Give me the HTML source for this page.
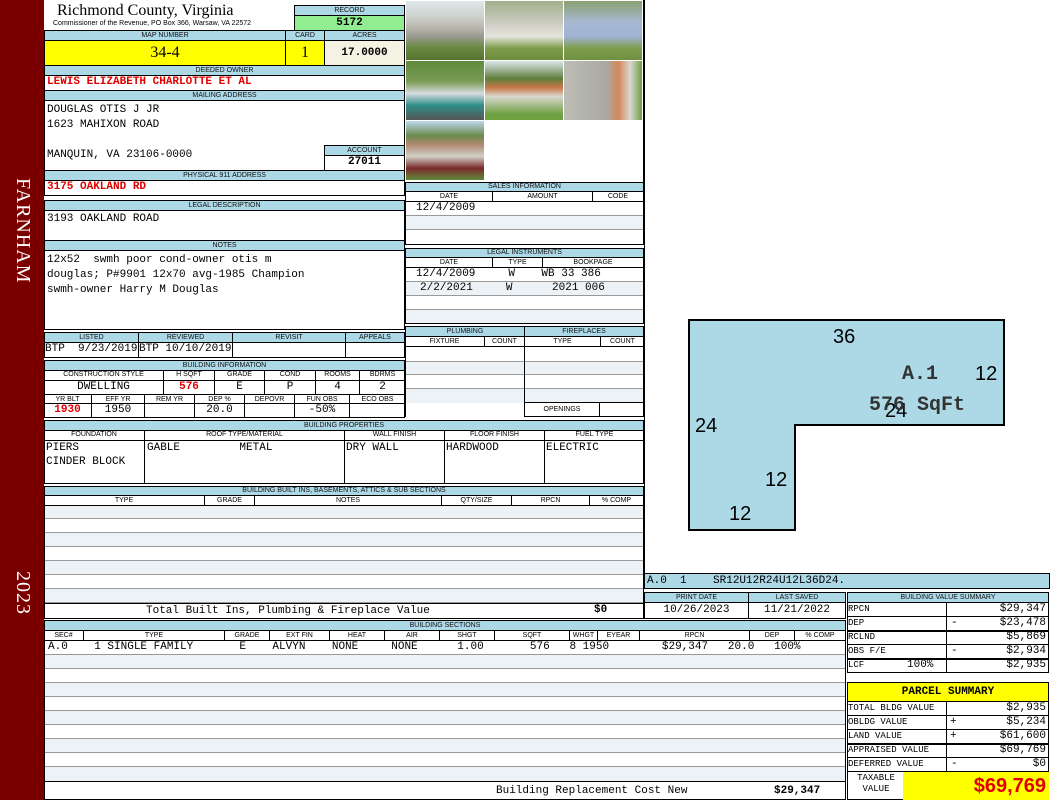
<!DOCTYPE html>
<html><head><meta charset="utf-8"><style>
*{margin:0;padding:0;box-sizing:border-box}
body{width:1050px;height:800px;background:#fff;position:relative;overflow:hidden;font-family:"Liberation Mono",monospace}
div{position:absolute}
.h{background:#add8e6;border:1px solid #000;font:7px/8px "Liberation Sans",sans-serif;text-align:center;color:#111;white-space:nowrap;overflow:hidden}
.b{border:1px solid #000;background:#fff}
.v{font-family:"Liberation Mono",monospace;font-size:11px;line-height:13px;white-space:pre;color:#000}
.r{color:#e00000;font-weight:bold}
.s{background:#edf2f7;border-bottom:1px solid #999}
.w{background:#fff;border-bottom:1px solid #999}
.ph{background:linear-gradient(#dfe7ea 0,#cfd4cf 25%,#b8b6ad 45%,#9a9990 60%,#6d8a45 78%,#55732e 100%);border:1px solid #fff}
.side{color:#fff;font:20px "Liberation Serif",serif;transform:rotate(90deg);transform-origin:left top;white-space:nowrap;letter-spacing:1px}
</style></head><body>
<div style="left:0;top:0;width:44px;height:800px;background:#7a0000"></div>
<div class="side" style="left:34px;top:178px">FARNHAM</div>
<div class="side" style="left:34px;top:571px">2023</div>

<!-- header -->
<div style="left:57px;top:2px;font:16px/18px 'Liberation Serif',serif">Richmond County, Virginia</div>
<div style="left:53px;top:20px;font:7px/8px 'Liberation Sans',sans-serif">Commissioner of the Revenue, PO Box 366, Warsaw, VA 22572</div>
<div class="h" style="left:294px;top:5px;width:111px;height:11px;line-height:9px">RECORD</div>
<div class="b v" style="left:294px;top:15px;width:111px;height:16px;background:#90ee90;text-align:center;font-weight:bold;line-height:14px">5172</div>
<div class="h" style="left:44px;top:30px;width:242px;height:11px;line-height:9px">MAP NUMBER</div>
<div class="h" style="left:285px;top:30px;width:40px;height:11px;line-height:9px">CARD</div>
<div class="h" style="left:324px;top:30px;width:81px;height:11px;line-height:9px">ACRES</div>
<div class="b" style="left:44px;top:40px;width:242px;height:26px;background:#ffff00;font:16px/24px 'Liberation Serif',serif;text-align:center">34-4</div>
<div class="b" style="left:285px;top:40px;width:40px;height:26px;background:#ffff00;font:16px/24px 'Liberation Serif',serif;text-align:center">1</div>
<div class="b v" style="left:324px;top:40px;width:81px;height:26px;background:#f4f2e2;text-align:center;font-weight:bold;line-height:24px">17.0000</div>
<div class="h" style="left:44px;top:65px;width:361px;height:11px;line-height:9px">DEEDED OWNER</div>
<div class="b v r" style="left:44px;top:75px;width:361px;height:16px;padding-left:2px">LEWIS ELIZABETH CHARLOTTE ET AL</div>
<div class="h" style="left:44px;top:90px;width:361px;height:11px;line-height:9px">MAILING ADDRESS</div>
<div class="b v" style="left:44px;top:100px;width:361px;height:71px;padding:2px 2px;line-height:15px">DOUGLAS OTIS J JR
1623 MAHIXON ROAD

MANQUIN, VA 23106-0000</div>
<div class="h" style="left:324px;top:145px;width:81px;height:11px;line-height:9px">ACCOUNT</div>
<div class="b v" style="left:324px;top:155px;width:81px;height:16px;text-align:center;font-weight:bold">27011</div>
<div class="h" style="left:44px;top:170px;width:361px;height:11px;line-height:9px">PHYSICAL 911 ADDRESS</div>
<div class="b v r" style="left:44px;top:180px;width:361px;height:16px;padding-left:2px">3175 OAKLAND RD</div>
<div class="h" style="left:44px;top:200px;width:361px;height:11px;line-height:9px">LEGAL DESCRIPTION</div>
<div class="b v" style="left:44px;top:210px;width:361px;height:31px;padding:2px">3193 OAKLAND ROAD</div>
<div class="h" style="left:44px;top:240px;width:361px;height:11px;line-height:9px">NOTES</div>
<div class="b v" style="left:44px;top:250px;width:361px;height:80px;padding:2px;line-height:15px">12x52  swmh poor cond-owner otis m
douglas; P#9901 12x70 avg-1985 Champion
swmh-owner Harry M Douglas</div>

<!-- listed -->
<div class="h" style="left:44px;top:332px;width:95px;height:11px;line-height:9px">LISTED</div>
<div class="h" style="left:138px;top:332px;width:95px;height:11px;line-height:9px">REVIEWED</div>
<div class="h" style="left:232px;top:332px;width:114px;height:11px;line-height:9px">REVISIT</div>
<div class="h" style="left:345px;top:332px;width:60px;height:11px;line-height:9px">APPEALS</div>
<div class="b v" style="left:44px;top:342px;width:95px;height:16px">BTP  9/23/2019</div>
<div class="b v" style="left:138px;top:342px;width:95px;height:16px">BTP 10/10/2019</div>
<div class="b" style="left:232px;top:342px;width:114px;height:16px"></div>
<div class="b" style="left:345px;top:342px;width:60px;height:16px"></div>

<!-- building info -->
<div class="h" style="left:44px;top:360px;width:361px;height:11px;line-height:9px">BUILDING INFORMATION</div>
<div class="b" style="left:44px;top:370px;width:361px;height:48px"></div>
<div style="left:44px;top:370px;width:361px;height:48px;font:7px/10px 'Liberation Sans',sans-serif">
<div style="left:0;top:0;width:120px;height:10px;text-align:center;border-right:1px solid #000">CONSTRUCTION STYLE</div>
<div style="left:120px;top:0;width:51px;text-align:center;border-right:1px solid #000">H SQFT</div>
<div style="left:171px;top:0;width:50px;text-align:center;border-right:1px solid #000">GRADE</div>
<div style="left:221px;top:0;width:51px;text-align:center;border-right:1px solid #000">COND</div>
<div style="left:272px;top:0;width:44px;text-align:center;border-right:1px solid #000">ROOMS</div>
<div style="left:316px;top:0;width:45px;text-align:center">BDRMS</div>
<div class="v" style="left:0;top:10px;width:120px;text-align:center;border-right:1px solid #000;border-top:1px solid #000">DWELLING</div>
<div class="v r" style="left:120px;top:10px;width:51px;text-align:center;border-right:1px solid #000;border-top:1px solid #000">576</div>
<div class="v" style="left:171px;top:10px;width:50px;text-align:center;border-right:1px solid #000;border-top:1px solid #000">E</div>
<div class="v" style="left:221px;top:10px;width:51px;text-align:center;border-right:1px solid #000;border-top:1px solid #000">P</div>
<div class="v" style="left:272px;top:10px;width:44px;text-align:center;border-right:1px solid #000;border-top:1px solid #000">4</div>
<div class="v" style="left:316px;top:10px;width:45px;text-align:center;border-top:1px solid #000">2</div>
<div style="left:0;top:24px;width:48px;text-align:center;border-right:1px solid #000;border-top:1px solid #000">YR BLT</div>
<div style="left:48px;top:24px;width:53px;text-align:center;border-right:1px solid #000;border-top:1px solid #000">EFF YR</div>
<div style="left:101px;top:24px;width:50px;text-align:center;border-right:1px solid #000;border-top:1px solid #000">REM YR</div>
<div style="left:151px;top:24px;width:50px;text-align:center;border-right:1px solid #000;border-top:1px solid #000">DEP %</div>
<div style="left:201px;top:24px;width:50px;text-align:center;border-right:1px solid #000;border-top:1px solid #000">DEPOVR</div>
<div style="left:251px;top:24px;width:55px;text-align:center;border-right:1px solid #000;border-top:1px solid #000">FUN OBS</div>
<div style="left:306px;top:24px;width:55px;text-align:center;border-top:1px solid #000">ECO OBS</div>
<div class="v r" style="left:0;top:33px;width:48px;height:14px;text-align:center;border-right:1px solid #000;border-top:1px solid #000">1930</div>
<div class="v" style="left:48px;top:33px;width:53px;height:14px;text-align:center;border-right:1px solid #000;border-top:1px solid #000">1950</div>
<div style="left:101px;top:33px;width:50px;height:14px;border-right:1px solid #000;border-top:1px solid #000"></div>
<div class="v" style="left:151px;top:33px;width:50px;height:14px;text-align:center;border-right:1px solid #000;border-top:1px solid #000">20.0</div>
<div style="left:201px;top:33px;width:50px;height:14px;border-right:1px solid #000;border-top:1px solid #000"></div>
<div class="v" style="left:251px;top:33px;width:55px;height:14px;text-align:center;border-right:1px solid #000;border-top:1px solid #000">-50%</div>
<div style="left:306px;top:33px;width:55px;height:14px;border-top:1px solid #000"></div>
</div>

<!-- photos -->
<div class="ph" style="left:405px;top:0;width:80px;height:61px"></div>
<div class="ph" style="left:484px;top:0;width:80px;height:61px;background:linear-gradient(#9fb08a 0,#c9c9bf 35%,#e4e4dc 60%,#7f9b4c 80%,#6d8c3c 100%)"></div>
<div class="ph" style="left:563px;top:0;width:80px;height:61px;background:linear-gradient(#8aa070 0,#a7b8d0 35%,#9fb4d4 60%,#7f9e4d 80%,#6f9040 100%)"></div>
<div class="ph" style="left:405px;top:60px;width:80px;height:61px;background:linear-gradient(#5f8a3c 0,#7a9c55 35%,#d8dce0 55%,#2f8f88 75%,#555 100%)"></div>
<div class="ph" style="left:484px;top:60px;width:80px;height:61px;background:linear-gradient(#dbe6ec 0,#5f7f3c 30%,#c9784a 45%,#d8d8d0 60%,#6fa040 90%)"></div>
<div class="ph" style="left:563px;top:60px;width:80px;height:61px;background:linear-gradient(90deg,#bdbdb6 0,#a9a9a2 55%,#d6875a 70%,#d8d8d0 85%,#6fa040 100%)"></div>
<div class="ph" style="left:405px;top:120px;width:80px;height:61px;background:linear-gradient(#bcd8ec 0,#6b8a4c 25%,#b08a70 40%,#d0d0c8 60%,#7a2a2a 80%,#5f8a3a 100%)"></div>
<div style="left:643px;top:0;width:2px;height:182px;background:#000"></div>

<!-- sales -->
<div class="h" style="left:405px;top:182px;width:239px;height:10px;line-height:8px">SALES INFORMATION</div>
<div class="b" style="left:405px;top:191px;width:239px;height:54px"></div>
<div style="left:406px;top:192px;font:7px/9px 'Liberation Sans',sans-serif">
<div style="left:0;top:0;width:87px;text-align:center;border-right:1px solid #000">DATE</div>
<div style="left:87px;top:0;width:100px;text-align:center;border-right:1px solid #000">AMOUNT</div>
<div style="left:187px;top:0;width:50px;text-align:center">CODE</div></div>
<div class="w v" style="left:406px;top:201px;width:237px;height:15px;border-top:1px solid #000;padding-left:10px">12/4/2009</div>
<div class="s" style="left:406px;top:216px;width:237px;height:14px"></div>
<div class="w" style="left:406px;top:230px;width:237px;height:14px;border:0"></div>

<div class="h" style="left:405px;top:248px;width:239px;height:10px;line-height:8px">LEGAL INSTRUMENTS</div>
<div class="b" style="left:405px;top:257px;width:239px;height:67px"></div>
<div style="left:406px;top:258px;font:7px/9px 'Liberation Sans',sans-serif">
<div style="left:0;top:0;width:87px;text-align:center;border-right:1px solid #000">DATE</div>
<div style="left:87px;top:0;width:50px;text-align:center;border-right:1px solid #000">TYPE</div>
<div style="left:137px;top:0;width:100px;text-align:center">BOOKPAGE</div></div>
<div class="w v" style="left:406px;top:267px;width:237px;height:15px;border-top:1px solid #000;padding-left:10px">12/4/2009     W    WB 33 386</div>
<div class="s v" style="left:406px;top:282px;width:237px;height:14px;padding-left:14px">2/2/2021     W      2021 006</div>
<div class="w" style="left:406px;top:296px;width:237px;height:14px"></div>
<div class="s" style="left:406px;top:310px;width:237px;height:13px;border:0"></div>

<!-- plumbing -->
<div class="h" style="left:405px;top:326px;width:120px;height:11px;line-height:9px">PLUMBING</div>
<div class="h" style="left:524px;top:326px;width:120px;height:11px;line-height:9px">FIREPLACES</div>
<div class="b" style="left:405px;top:336px;width:120px;height:81px;border-bottom:0;border-right:0"></div>
<div class="b" style="left:524px;top:336px;width:120px;height:81px"></div>
<div style="left:405px;top:337px;font:7px/9px 'Liberation Sans',sans-serif">
<div style="left:0;top:0;width:80px;text-align:center;border-right:1px solid #000">FIXTURE</div>
<div style="left:80px;top:0;width:39px;text-align:center">COUNT</div>
<div style="left:119px;top:0;width:77px;text-align:center;border-left:1px solid #000;border-right:1px solid #000">TYPE</div>
<div style="left:196px;top:0;width:43px;text-align:center">COUNT</div></div>
<div class="w" style="left:406px;top:346px;width:118px;height:16px;border-top:1px solid #000"></div>
<div class="s" style="left:406px;top:362px;width:118px;height:13px"></div>
<div class="w" style="left:406px;top:375px;width:118px;height:14px"></div>
<div class="s" style="left:406px;top:389px;width:118px;height:14px;border:0"></div>
<div class="w" style="left:525px;top:346px;width:118px;height:16px;border-top:1px solid #000"></div>
<div class="s" style="left:525px;top:362px;width:118px;height:13px"></div>
<div class="w" style="left:525px;top:375px;width:118px;height:14px"></div>
<div class="s" style="left:525px;top:389px;width:118px;height:14px;border-bottom:1px solid #000"></div>
<div style="left:525px;top:403px;width:75px;height:13px;border-right:1px solid #000;font:7px/13px 'Liberation Sans',sans-serif;text-align:center">OPENINGS</div>

<!-- building properties -->
<div class="h" style="left:44px;top:420px;width:600px;height:11px;line-height:9px">BUILDING PROPERTIES</div>
<div class="b" style="left:44px;top:430px;width:600px;height:54px"></div>
<div style="left:44px;top:430px;font:7px/10px 'Liberation Sans',sans-serif">
<div style="left:0;top:0;width:101px;height:53px;text-align:center;border-right:1px solid #000">FOUNDATION</div>
<div style="left:101px;top:0;width:200px;height:53px;text-align:center;border-right:1px solid #000">ROOF TYPE/MATERIAL</div>
<div style="left:301px;top:0;width:100px;height:53px;text-align:center;border-right:1px solid #000">WALL FINISH</div>
<div style="left:401px;top:0;width:100px;height:53px;text-align:center;border-right:1px solid #000">FLOOR FINISH</div>
<div style="left:501px;top:0;width:99px;text-align:center">FUEL TYPE</div>
<div style="left:0;top:10px;width:600px;border-top:1px solid #000"></div>
<div class="v" style="left:2px;top:11px;line-height:14px">PIERS
CINDER BLOCK</div>
<div class="v" style="left:103px;top:11px;line-height:14px">GABLE         METAL</div>
<div class="v" style="left:302px;top:11px;line-height:14px">DRY WALL</div>
<div class="v" style="left:402px;top:11px;line-height:14px">HARDWOOD</div>
<div class="v" style="left:502px;top:11px;line-height:14px">ELECTRIC</div></div>

<!-- built ins -->
<div class="h" style="left:44px;top:486px;width:600px;height:10px;line-height:8px">BUILDING BUILT INS, BASEMENTS, ATTICS &amp; SUB SECTIONS</div>
<div class="b" style="left:44px;top:495px;width:600px;height:124px"></div>
<div style="left:44px;top:496px;font:7px/9px 'Liberation Sans',sans-serif">
<div style="left:0;top:0;width:161px;text-align:center;border-right:1px solid #000">TYPE</div>
<div style="left:161px;top:0;width:50px;text-align:center;border-right:1px solid #000">GRADE</div>
<div style="left:211px;top:0;width:187px;text-align:center;border-right:1px solid #000">NOTES</div>
<div style="left:398px;top:0;width:70px;text-align:center;border-right:1px solid #000">QTY/SIZE</div>
<div style="left:468px;top:0;width:78px;text-align:center;border-right:1px solid #000">RPCN</div>
<div style="left:546px;top:0;width:53px;text-align:center">% COMP</div></div>
<div class="s" style="left:45px;top:505px;width:598px;height:14px;border-top:1px solid #000"></div>
<div class="w" style="left:45px;top:519px;width:598px;height:14px"></div>
<div class="s" style="left:45px;top:533px;width:598px;height:14px"></div>
<div class="w" style="left:45px;top:547px;width:598px;height:14px"></div>
<div class="s" style="left:45px;top:561px;width:598px;height:14px"></div>
<div class="w" style="left:45px;top:575px;width:598px;height:14px"></div>
<div class="s" style="left:45px;top:589px;width:598px;height:14px"></div>
<div class="v" style="left:45px;top:603px;width:598px;height:15px;border-top:1px solid #000;padding-left:101px;line-height:15px">Total Built Ins, Plumbing &amp; Fireplace Value</div>
<div class="v" style="left:594px;top:603px;font-weight:bold;line-height:15px">$0</div>

<!-- sketch -->
<div style="left:644px;top:0;width:406px;height:574px;border-left:1px solid #000;background:#fff">
<svg width="406" height="574" style="position:absolute;left:0;top:0">
<polygon points="44,320 359,320 359,425 150,425 150,530 44,530" fill="#add8e6" stroke="#000" stroke-width="2"/>
<g font-family="Liberation Sans,sans-serif" font-size="20" fill="#000">
<text x="188" y="343">36</text><text x="330" y="380">12</text><text x="50" y="432">24</text>
<text x="240" y="417">24</text><text x="120" y="486">12</text><text x="84" y="520">12</text></g>
<g font-family="Liberation Mono,monospace" font-size="20" font-weight="bold" fill="#333">
<text x="257" y="379">A.1</text><text x="224" y="410">576 SqFt</text></g>
</svg></div>
<div class="v" style="left:644px;top:573px;width:406px;height:16px;background:#add8e6;border:1px solid #000;padding-left:2px;line-height:14px">A.0  1    SR12U12R24U12L36D24.</div>

<!-- print/saved -->
<div class="h" style="left:644px;top:592px;width:105px;height:11px;line-height:9px">PRINT DATE</div>
<div class="h" style="left:748px;top:592px;width:98px;height:11px;line-height:9px">LAST SAVED</div>
<div class="b v" style="left:644px;top:602px;width:105px;height:17px;text-align:center;line-height:15px">10/26/2023</div>
<div class="b v" style="left:748px;top:602px;width:98px;height:17px;text-align:center;line-height:15px">11/21/2022</div>

<!-- building sections -->
<div class="h" style="left:44px;top:620px;width:802px;height:11px;line-height:9px">BUILDING SECTIONS</div>
<div class="b" style="left:44px;top:630px;width:802px;height:170px"></div>
<div style="left:44px;top:631px;font:7px/9px 'Liberation Sans',sans-serif">
<div style="left:0;width:40px;text-align:center;border-right:1px solid #000">SEC#</div>
<div style="left:40px;width:141px;text-align:center;border-right:1px solid #000">TYPE</div>
<div style="left:181px;width:45px;text-align:center;border-right:1px solid #000">GRADE</div>
<div style="left:226px;width:60px;text-align:center;border-right:1px solid #000">EXT FIN</div>
<div style="left:286px;width:55px;text-align:center;border-right:1px solid #000">HEAT</div>
<div style="left:341px;width:55px;text-align:center;border-right:1px solid #000">AIR</div>
<div style="left:396px;width:55px;text-align:center;border-right:1px solid #000">SHGT</div>
<div style="left:451px;width:75px;text-align:center;border-right:1px solid #000">SQFT</div>
<div style="left:526px;width:28px;text-align:center;border-right:1px solid #000">WHGT</div>
<div style="left:554px;width:42px;text-align:center;border-right:1px solid #000">EYEAR</div>
<div style="left:596px;width:110px;text-align:center;border-right:1px solid #000">RPCN</div>
<div style="left:706px;width:45px;text-align:center;border-right:1px solid #000">DEP</div>
<div style="left:751px;width:50px;text-align:center">% COMP</div></div>
<div class="w v" style="left:45px;top:640px;width:800px;height:15px;border-top:1px solid #000;padding-left:3px">A.0    1 SINGLE FAMILY       E    ALVYN    NONE     NONE      1.00       576   8 1950        $29,347   20.0   100%</div>
<div class="s" style="left:45px;top:655px;width:800px;height:14px"></div>
<div class="w" style="left:45px;top:669px;width:800px;height:14px"></div>
<div class="s" style="left:45px;top:683px;width:800px;height:14px"></div>
<div class="w" style="left:45px;top:697px;width:800px;height:14px"></div>
<div class="s" style="left:45px;top:711px;width:800px;height:14px"></div>
<div class="w" style="left:45px;top:725px;width:800px;height:14px"></div>
<div class="s" style="left:45px;top:739px;width:800px;height:14px"></div>
<div class="w" style="left:45px;top:753px;width:800px;height:14px"></div>
<div class="s" style="left:45px;top:767px;width:800px;height:15px;border-bottom:1px solid #000"></div>
<div class="v" style="left:496px;top:784px;line-height:14px">Building Replacement Cost New</div>
<div class="v" style="left:774px;top:784px;line-height:14px;font-weight:bold">$29,347</div>

<!-- value summary -->
<div class="h" style="left:847px;top:592px;width:202px;height:11px;line-height:9px">BUILDING VALUE SUMMARY</div>
<div class="b" style="left:847px;top:602px;width:202px;height:71px"></div>
<div style="left:847px;top:602px;width:202px;font:9px/14px 'Liberation Mono',monospace">
<div style="left:0;top:0;width:100px;height:71px;border-right:1px solid #000"></div>
<div style="left:1px;top:0">RPCN</div><div style="left:1px;top:14px">DEP</div><div style="left:1px;top:28px">RCLND</div><div style="left:1px;top:42px">OBS F/E</div><div style="left:1px;top:56px">LCF</div>
<div style="left:60px;top:56px;font-size:11px">100%</div>
<div style="left:0;top:14px;width:202px;border-top:1px solid #000"></div>
<div style="left:0;top:28px;width:202px;border-top:2px solid #000"></div>
<div style="left:0;top:42px;width:202px;border-top:1px solid #000"></div>
<div style="left:0;top:56px;width:202px;border-top:2px solid #000"></div>
<div style="left:104px;top:14px;font-size:11px">-</div><div style="left:104px;top:42px;font-size:11px">-</div>
<div style="right:3px;top:0;font-size:11px">$29,347</div>
<div style="right:3px;top:14px;font-size:11px">$23,478</div>
<div style="right:3px;top:28px;font-size:11px">$5,869</div>
<div style="right:3px;top:42px;font-size:11px">$2,934</div>
<div style="right:3px;top:56px;font-size:11px">$2,935</div></div>

<div class="b" style="left:847px;top:682px;width:202px;height:20px;background:#ffff00;font:bold 11px/18px 'Liberation Mono',monospace;text-align:center">PARCEL SUMMARY</div>
<div class="b" style="left:847px;top:701px;width:202px;height:99px"></div>
<div style="left:847px;top:701px;width:202px;font:9px/14px 'Liberation Mono',monospace">
<div style="left:0;top:0;width:100px;height:70px;border-right:1px solid #000"></div>
<div style="left:1px;top:0">TOTAL BLDG VALUE</div><div style="left:1px;top:14px">OBLDG VALUE</div><div style="left:1px;top:28px">LAND VALUE</div><div style="left:1px;top:42px">APPRAISED VALUE</div><div style="left:1px;top:56px">DEFERRED VALUE</div>
<div style="left:0;top:14px;width:202px;border-top:1px solid #000"></div>
<div style="left:0;top:28px;width:202px;border-top:1px solid #000"></div>
<div style="left:0;top:42px;width:202px;border-top:2px solid #000"></div>
<div style="left:0;top:56px;width:202px;border-top:1px solid #000"></div>
<div style="left:0;top:70px;width:202px;border-top:1px solid #000"></div>
<div style="left:103px;top:14px;font-size:11px">+</div><div style="left:103px;top:28px;font-size:11px">+</div><div style="left:104px;top:56px;font-size:11px">-</div>
<div style="right:3px;top:0;font-size:11px">$2,935</div>
<div style="right:3px;top:14px;font-size:11px">$5,234</div>
<div style="right:3px;top:28px;font-size:11px">$61,600</div>
<div style="right:3px;top:42px;font-size:11px">$69,769</div>
<div style="right:3px;top:56px;font-size:11px">$0</div>
<div style="left:4px;top:72px;width:50px;text-align:center;line-height:11px">TAXABLE<br>VALUE</div>
<div style="left:56px;top:71px;width:146px;height:28px;background:#ffff00;color:#e00000;font:bold 20px/28px 'Liberation Sans',sans-serif;text-align:right;padding-right:3px">$69,769</div></div>
</body></html>
